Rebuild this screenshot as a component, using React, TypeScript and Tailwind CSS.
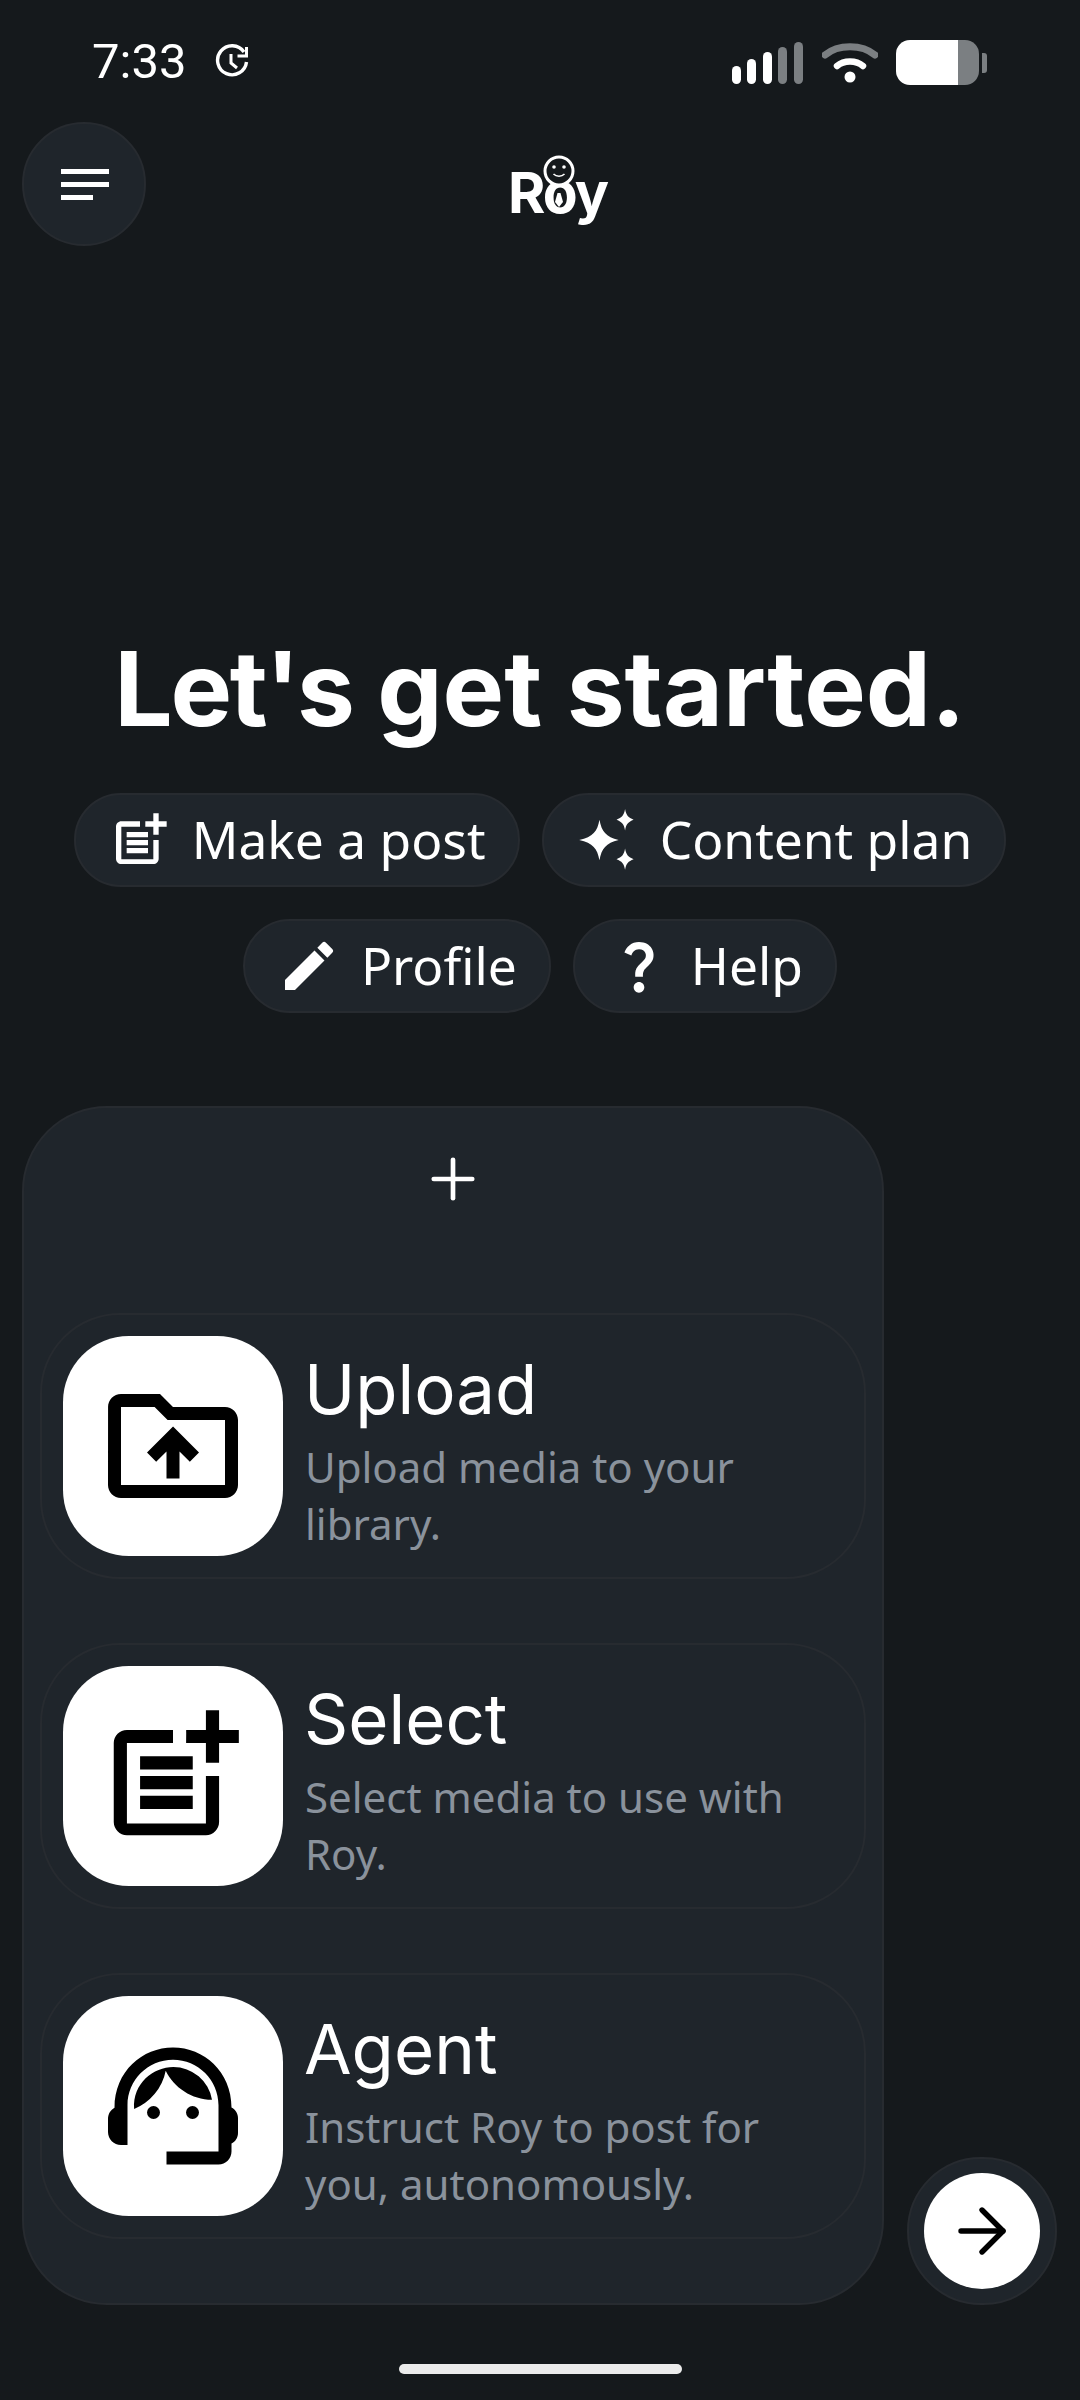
import React from 'react';
import { MdEdit, MdOutlineDriveFolderUpload, MdOutlinePostAdd, MdOutlineSupportAgent, MdQuestionMark } from 'react-icons/md';
import { ArrowRight, Plus } from 'lucide-react';

const StatusBar = () => (
  <div className="flex h-[122px] items-start justify-between pl-[92px] pr-[93px] pt-[35px]">
    <div className="flex items-center gap-[29px]">
      <span className="font-['Roboto',sans-serif] text-[49px] font-normal leading-[54px] text-white">7:33</span>
      <svg viewBox="0 0 34 36" className="h-[36px] w-[34px]" fill="none" stroke="white" strokeWidth="3.4">
        <path d="M29 8A14.5 14.5 0 1 0 31.5 18" />
        <path d="M31.5 3v9h-9" strokeWidth="3" />
        <path d="M16 10v9l6 5" strokeWidth="3" />
      </svg>
    </div>
    <div className="flex items-center gap-[18px] pt-[5px]">
      <svg viewBox="0 0 72 42" className="h-[42px] w-[72px]">
        <rect x="0" y="24" width="9" height="18" rx="4.5" fill="#fff" />
        <rect x="15" y="17" width="9" height="25" rx="4.5" fill="#fff" />
        <rect x="31" y="10" width="9" height="32" rx="4.5" fill="#fff" />
        <rect x="46" y="5" width="9" height="37" rx="4.5" fill="#7b7f82" />
        <rect x="62" y="0" width="9" height="42" rx="4.5" fill="#7b7f82" />
      </svg>
      <svg viewBox="0 0 56 42" className="h-[42px] w-[56px]" fill="none" strokeLinecap="round">
        <path d="M3 13C16 2 40 2 53 13" stroke="#7b7f82" strokeWidth="7" />
        <path d="M15 24C22 18 34 18 41 24" stroke="#fff" strokeWidth="6.5" />
        <circle cx="28" cy="35" r="5.5" fill="#fff" />
      </svg>
      <div className="flex items-center gap-[3px]">
        <div className="flex h-[45px] w-[83px] overflow-hidden rounded-[14px]">
          <div className="w-[62px] bg-white" />
          <div className="flex-1 bg-[#7b7f82]" />
        </div>
        <div className="h-[20px] w-[5px] rounded-r-[3px] bg-[#7b7f82]" />
      </div>
    </div>
  </div>
);

const Logo = () => (
  <div className="relative font-['Inter',sans-serif] text-[57px] font-bold leading-[70px] tracking-[-2px] text-white">
    Roy
    {/* head sits on top of the o */}
    <svg viewBox="0 0 32 32" className="absolute left-[35px] top-[-3px] h-[32px] w-[32px]" fill="none" stroke="white">
      <circle cx="16" cy="16" r="14" strokeWidth="3" fill="#15191c" />
      <circle cx="11" cy="12" r="1.8" fill="white" stroke="none" />
      <circle cx="21" cy="12" r="1.8" fill="white" stroke="none" />
      <path d="M10.5 19c3 3 8 3 11 0" strokeWidth="1.6" />
    </svg>
    {/* tie inside the o */}
    <svg viewBox="0 0 8 14" className="absolute left-[47px] top-[35px] h-[14px] w-[8px]" fill="white">
      <path d="M2.5 0h3L8 9l-4 5-4-5z" />
    </svg>
  </div>
);

const Chip = ({ icon, label }: { icon: React.ReactNode; label: string }) => (
  <div className="flex h-[94px] items-center gap-[20px] rounded-full border-2 border-[#272b30] bg-[#1f252b] pl-[32px] pr-[32px]">
    {icon}
    <span className="font-['Noto_Sans',sans-serif] text-[51.5px] leading-none text-white">{label}</span>
  </div>
);

const Sparkles = () => (
  <svg viewBox="0 0 60 60" className="h-[64px] w-[64px]" fill="white">
    <path d="M22 11c2 11 6 16 18 19-12 3-16 8-18 19-2-11-6-16-19-19 13-3 17-8 19-19z" />
    <path d="M46 1c1 6 3 8 8 10-5 2-7 4-8 10-1-6-3-8-8-10 5-2 7-4 8-10z" />
    <path d="M46 38c1 6 3 8 8 10-5 2-7 4-8 10-1-6-3-8-8-10 5-2 7-4 8-10z" />
  </svg>
);

const Row = ({ icon, title, desc }: { icon: React.ReactNode; title: string; desc: string[] }) => (
  <div className="flex h-[266px] items-center gap-[21px] rounded-[80px] border-2 border-[#272b30] pl-[21px]">
    <div className="flex h-[220px] w-[220px] shrink-0 items-center justify-center rounded-[66px] bg-white text-black">
      {icon}
    </div>
    <div className="pt-[8px]">
      <div className="mb-[8px] font-['Inter',sans-serif] text-[69px] leading-[82px] text-white">{title}</div>
      {desc.map((line) => (
        <div key={line} className="ml-[1px] font-['Noto_Sans',sans-serif] text-[42px] leading-[57px] text-[#8a929c]">{line}</div>
      ))}
    </div>
  </div>
);

export default function App() {
  return (
    <div className="relative h-[2400px] w-[1080px] overflow-hidden bg-[#15191c]">
      <StatusBar />

      <div className="flex h-[124px] items-center pl-[22px]">
        <button className="flex h-[124px] w-[124px] flex-col items-start justify-center gap-[8px] rounded-full border-2 border-[#272b30] bg-[#1f252b] pl-[37px]">
          <span className="h-[5px] w-[48px] bg-white" />
          <span className="h-[5px] w-[48px] bg-white" />
          <span className="h-[5px] w-[32px] bg-white" />
        </button>
        <div className="ml-[362px] mt-[18px]">
          <Logo />
        </div>
      </div>

      <h1 className="mt-[383px] text-center font-['Inter',sans-serif] text-[103.5px] font-bold leading-[120px] text-white">
        <span className="tracking-[-2.4px]">Let's</span> get started.
      </h1>

      <div className="mt-[44px] flex flex-wrap justify-center gap-x-[22px] gap-y-[32px]">
        <Chip icon={<MdOutlinePostAdd className="h-[64px] w-[64px] text-white" />} label="Make a post" />
        <Chip icon={<Sparkles />} label="Content plan" />
        <Chip icon={<MdEdit className="h-[64px] w-[64px] text-white" />} label="Profile" />
        <Chip icon={<MdQuestionMark className="h-[64px] w-[64px] text-white" />} label="Help" />
      </div>

      <div className="mt-[93px] flex items-end pl-[22px]">
        <div className="h-[1199px] w-[862px] rounded-[85px] border-2 border-[#272b30] bg-[#1f252b] px-[16px]">
          <div className="flex h-[205px] justify-center pt-[38px] text-white">
            <Plus className="h-[66px] w-[66px]" strokeWidth={1.7} />
          </div>
          <div className="flex flex-col gap-[64px]">
            <Row icon={<MdOutlineDriveFolderUpload className="h-[156px] w-[156px]" />} title="Upload" desc={['Upload media to your', 'library.']} />
            <Row icon={<MdOutlinePostAdd className="h-[158px] w-[158px]" />} title="Select" desc={['Select media to use with', 'Roy.']} />
            <Row icon={<MdOutlineSupportAgent className="h-[156px] w-[156px]" />} title="Agent" desc={['Instruct Roy to post for', 'you, autonomously.']} />
          </div>
        </div>
        <div className="ml-[23px] flex h-[148px] w-[150px] items-center justify-center rounded-full border-2 border-[#272b30] bg-[#1f252b]">
          <div className="flex h-[116px] w-[116px] items-center justify-center rounded-full bg-white text-black">
            <ArrowRight className="h-[72px] w-[72px]" strokeWidth={1.8} />
          </div>
        </div>
      </div>

      <div className="mx-auto mt-[59px] h-[10px] w-[283px] rounded-full bg-[#ebebeb]" />
    </div>
  );
}
